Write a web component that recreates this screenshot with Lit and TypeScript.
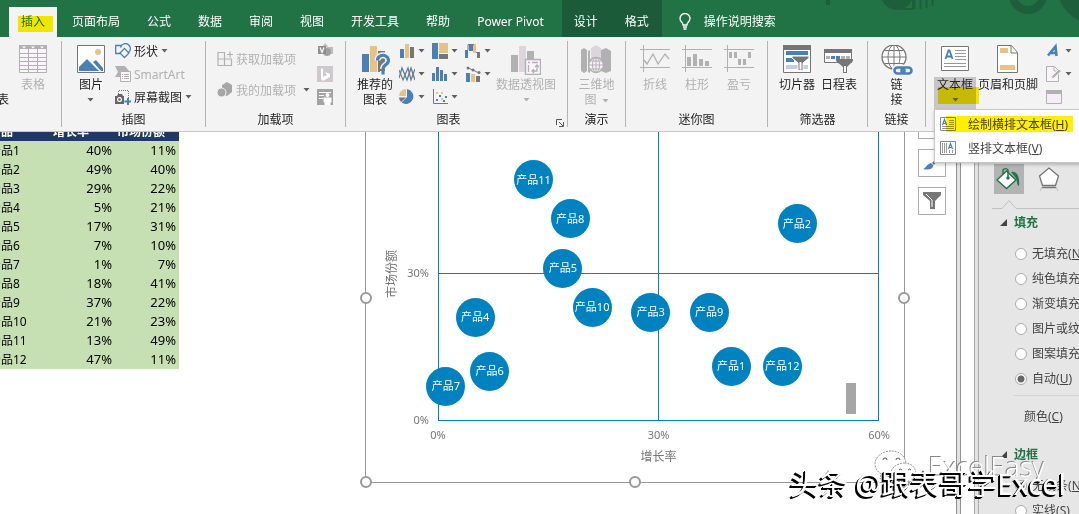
import { LitElement, html, css, svg, nothing, TemplateResult } from "lit";
import { customElement, state } from "lit/decorators.js";
import { classMap } from "lit/directives/class-map.js";

const BLUE = "#4a80b8";
const TAN = "#e8c283";
const GREY = "#767676";
const OFF = "#b1b1b1";

const icon = (w: number, h: number, body: unknown) =>
  html`<svg class="icon" width=${w} height=${h} viewBox="0 0 ${w} ${h}" fill="none" aria-hidden="true">${body}</svg>`;

const chevron = (off = false) =>
  html`<svg class="chevron" width="7" height="4" viewBox="0 0 7 4" aria-hidden="true"><path d="M0.500 0h6L3.500 3.500z" fill=${off ? OFF : "#5f5f5f"} /></svg>`;

const icons: Record<string, () => TemplateResult> = {
  table: () => icon(28, 28, svg`
    <path d="M0.500 0.500h27v27h-27z" fill="#faf5fa" stroke="${OFF}"/>
    <path d="M0 0h28v4H0z" fill="${OFF}"/>
    <path d="M3 1.500h4l-2 2zM12 1.500h4l-2 2zM21 1.500h4l-2 2z" fill="#fff"/>
    <path d="M0 8.500h28M0 12.500h28M0 16.500h28M0 20.500h28M0 24.500h28M9.500 4v24M18.500 4v24" stroke="${OFF}"/>`),
  picture: () => icon(28, 28, svg`
    <path d="M0.500 0.500h27v27h-27z" fill="#fff" stroke="${GREY}"/>
    <circle cx="21" cy="7" r="3" fill="${TAN}"/>
    <path d="M2 26v-4l8-8 12 12zM16 17l3-2 7 8v3h-2z" fill="${BLUE}"/>`),
  shapes: () => icon(16, 16, svg`
    <path d="M7 10.500H0.700v-8H7" stroke="${BLUE}" stroke-width="1.300"/>
    <path d="M5.500 4.500a5 5 0 1 1 8 5" stroke="${BLUE}" stroke-width="1.300"/>
    <path d="M9.500 5.500l4.500 4.500-4.500 4.500L5 10z" fill="#fff" stroke="${BLUE}" stroke-width="1.300"/>`),
  smartart: () => icon(16, 16, svg`
    <path d="M0 0h10l4 5H5v6H0l3-5z" fill="${OFF}"/>
    <path d="M5.500 5.500h10v10h-10z" fill="#faf5fa" stroke="${OFF}"/>
    <path d="M7 8.500h1M9 8.500h5M7 10.500h1M9 10.500h5M7 12.500h1M9 12.500h5" stroke="${OFF}"/>`),
  screenshot: () => icon(16, 16, svg`
    <path d="M3.500 5V1.500h10V9" stroke="${GREY}" stroke-dasharray="1 1"/>
    <path d="M0 7h2l1-2h4l1 2h1v8H0z" fill="#666"/>
    <circle cx="4.500" cy="10.500" r="2.500" fill="#fff"/><circle cx="4.500" cy="10.500" r="1.300" fill="#666"/>
    <path d="M13 9v7M9.500 12.500h7" stroke="${BLUE}" stroke-width="2"/>`),
  getAddins: () => icon(16, 16, svg`
    <path d="M1 1.500h6.500v13H1zM1 8h13.500v6.500H7.500M10 3.500h6M13 0.500v6" stroke="${OFF}" stroke-width="1.200"/>`),
  myAddins: () => icon(16, 16, svg`
    <path d="M5 3l5-3 5 3v7l-5 4-5-2z" fill="#a6a6a6"/><circle cx="4.500" cy="10.500" r="4.500" fill="#a6a6a6" stroke="#f3f3f3"/>`),
  visio: () => icon(16, 16, svg`
    <path d="M8 0l3 3-3 3-2-3zM10 4h6v7h-6z" fill="#bdbdbd"/><circle cx="10" cy="9" r="4" fill="#a0a0a0"/>
    <path d="M1 3h8v8H1z" fill="#8f8f8f"/><path d="M3 4.500l2 5 2-5" stroke="#fff" stroke-width="1.200"/>`),
  bing: () => icon(16, 16, svg`
    <path d="M0 0h16v16H0z" fill="#cdc9cd"/><path d="M4 2l2 1v8l4-2-2-3 5 2v3l-7 4-2-2z" fill="#fff"/>`),
  people: () => icon(16, 16, svg`
    <path d="M0 0h16v16H0z" fill="#a3a3a3"/><path d="M2 3.500h12M2 6.500h5M2 9.500h4" stroke="#fff"/>
    <circle cx="10.500" cy="6" r="2" fill="#fff"/><path d="M6.500 8.500h8v5h-1V16h-6v-3h-1z" fill="#fff"/>`),
  recommended: () => icon(30, 30, svg`
    <path d="M2 9h7v18H2z" fill="${BLUE}"/><path d="M10 1h7v26h-7z" fill="${TAN}"/><path d="M18 6h7v21h-7z" fill="${GREY}"/>
    <path d="M17.500 15.500a5.500 5 0 1 1 8.500 4c-2 1.500-3 2-3 4.500M23 26v3.500" stroke="#f3f3f3" stroke-width="6"/>
    <path d="M17.500 15.500a5.500 5 0 1 1 8.500 4c-2 1.500-3 2-3 4.500M23 26v3.500" stroke="${BLUE}" stroke-width="3.200"/>`),
  column: () => icon(16, 16, svg`
    <path d="M1 6h4v9H1z" fill="${BLUE}"/><path d="M6 1h4v14H6z" fill="${TAN}"/><path d="M11 4h4v11h-4z" fill="${GREY}"/>`),
  treemap: () => icon(16, 16, svg`
    <path d="M0 0h6v16H0z" fill="${BLUE}"/><path d="M7 0h9v10H7z" fill="${TAN}"/><path d="M7 11h9v5H7z" fill="${GREY}"/>`),
  waterfall: () => icon(16, 16, svg`
    <path d="M0 7h3v8H0zM4 2h4v6H4z" fill="${BLUE}"/><path d="M8 1h3v9H8z" fill="${TAN}"/><path d="M12 9h3v6h-3z" fill="${GREY}"/><path d="M3 7V1.500h6M11 9.500h2" stroke="${GREY}"/>`),
  line: () => icon(16, 16, svg`
    <path d="M0 12l3-10 5 12 4-12 4 12" stroke="${BLUE}" stroke-width="1.300"/>
    <path d="M0 4l4 10L9 2l3 12 4-11" stroke="${GREY}" stroke-width="1.200"/>`),
  histogram: () => icon(16, 16, svg`
    <path d="M0 7h3v8H0zM4 1h3v14H4zM8 4h3v11H8zM12 8h3v7h-3z" fill="${BLUE}"/>`),
  combo: () => icon(16, 16, svg`
    <path d="M1 7h4v9H1z" fill="${BLUE}"/><path d="M6 8h4v8H6z" fill="${TAN}"/><path d="M11 10h4v6h-4z" fill="${GREY}"/>
    <path d="M3 2l5 2 6 3" stroke="${GREY}"/><circle cx="3" cy="2" r="1.500" fill="${GREY}"/><circle cx="8" cy="4" r="1.500" fill="${GREY}"/><circle cx="14" cy="6.500" r="1.500" fill="${GREY}"/>`),
  pie: () => icon(16, 16, svg`
    <path d="M8 8V0a7.500 7.500 0 1 1-5.500 13.500z" fill="${BLUE}"/><path d="M7 7H0a7 7 0 0 1 7-7z" fill="${TAN}"/><path d="M7 8.500H0a7 7 0 0 0 2 4.500z" fill="${GREY}"/>`),
  scatter: () => icon(16, 16, svg`
    <path d="M1.500 0v14.500H16" stroke="${GREY}"/>
    <path d="M4 10h2v2H4zM7 6h2v2H7zM13 7h2v2h-2zM11 11h2v2h-2z" fill="${BLUE}"/><path d="M4 3h2v2H4zM9 9h2v2H9zM9 3h2v2H9z" fill="${TAN}"/>`),
  pivotChart: () => icon(30, 30, svg`
    <path d="M0 10h7v17H0zM16 6h7v10h-7z" fill="${OFF}"/><path d="M8 1h7v26H8z" fill="#dcd6dc"/>
    <path d="M14.500 14.500h15v15h-15z" fill="#faf5fa" stroke="${OFF}" stroke-width="1.400"/>
    <path d="M17 17.500h2M21 17.500h6M17.500 20v7M21 26h5v-6M23 24l-2 2 2 2M24 22l2-2 2 2" stroke="${OFF}" stroke-width="1.300"/>`),
  map3d: () => icon(30, 30, svg`
    <path d="M0 5l3-2 3 2v21l-3 2-3-2zM20 5l5-2 5 3v20l-5 2-5-2zM7 6l2-1v23l-2-1z" fill="${OFF}"/>
    <path d="M10 3l5-3 5 3v20H10z" fill="#dcd6dc"/>
    <circle cx="15" cy="20" r="7.500" fill="#f6f2f6" stroke="${OFF}" stroke-width="1.500"/>
    <path d="M7.500 20h15M15 12.500v15M9 16h12M9 24h12" stroke="${OFF}"/><ellipse cx="15" cy="20" rx="3.500" ry="7.500" stroke="${OFF}"/>`),
  sparkLine: () => icon(30, 28, svg`
    <path d="M0 4.500h30M0 22.500h30M3.500 0v27" stroke="${OFF}"/><path d="M4 15l3 4 6-10 5 10 7-10 4 5" stroke="${OFF}" stroke-width="1.300"/>`),
  sparkColumn: () => icon(30, 28, svg`
    <path d="M0 4.500h30M0 22.500h30M3.500 0v27" stroke="${OFF}"/><path d="M5 12h4v9H5zM11 9h4v12h-4zM17 14h4v7h-4zM23 16h4v5h-4z" fill="${OFF}"/>`),
  sparkWin: () => icon(30, 28, svg`
    <path d="M0 4.500h30M0 22.500h30M3.500 0v27" stroke="${OFF}"/><path d="M5 7h3v6H5zM10 7h3v6h-3zM14 14h3v6h-3zM19 14h3v6h-3zM24 7h3v6h-3z" fill="${OFF}"/>`),
  slicer: () => icon(28, 28, svg`
    <path d="M0.500 0.500h27v27h-27z" fill="#fff" stroke="${GREY}"/><path d="M0 0h28v5H0z" fill="${GREY}"/>
    <path d="M3 6h22v4H3zM3 13h8v4H3z" fill="${BLUE}"/><path d="M3 20h22v4H3z" fill="#bdd0e6"/>
    <path d="M9 11h17v2l-6 5v8l-5-1v-7l-6-5z" fill="${GREY}" stroke="#fff"/><path d="M16.500 17h2v8l-2-1z" fill="#fff"/>`),
  timeline: () => icon(30, 28, svg`
    <path d="M0.500 4.500h27v13h-27z" fill="#fff" stroke="${GREY}"/><path d="M0 4h28v4H0z" fill="${GREY}"/>
    <path d="M2 11h4v3H2z" fill="${OFF}"/><path d="M7 11h4v3H7zM12 11h4v3h-4z" fill="${BLUE}"/><path d="M17 11h4v3h-4zM22 11h4v3h-4z" fill="${OFF}"/>
    <path d="M12 14h17v2l-6 6v8h-4v-8l-7-6z" fill="${GREY}"/><path d="M20 21h2v6h-2z" fill="#fff"/>`),
  link: () => icon(32, 30, svg`
    <circle cx="13" cy="12" r="12" fill="#fff" stroke="${GREY}" stroke-width="1.300"/>
    <path d="M13 0v24M1 12h24M3.500 5.500h19M3.500 18.500h19" stroke="${GREY}"/><ellipse cx="13" cy="12" rx="6" ry="12" stroke="${GREY}"/>
    <rect x="13.500" y="21.500" width="10" height="7" rx="3.500" stroke="#f3f3f3" stroke-width="5"/>
    <rect x="13.500" y="22.500" width="10" height="6" rx="3" stroke="${BLUE}" stroke-width="2.600"/>
    <rect x="20.500" y="22.500" width="10" height="6" rx="3" stroke="${BLUE}" stroke-width="2.600"/>`),
  textBox: () => icon(28, 28, svg`
    <path d="M0.500 1.500h27v24h-27z" fill="#fff" stroke="${GREY}"/>
    <path d="M4.500 14L7.500 5.500h1l3 8.500M5.500 11.500h5" stroke="${BLUE}" stroke-width="1.800"/>
    <path d="M14 5.500h11M14 8.500h11M14 11.500h11M14 14.500h11M3 18.500h22M3 21.500h22" stroke="#999"/>`),
  headerFooter: () => icon(22, 28, svg`
    <path d="M0.500 0.500h14l6 7v20H0.500z" fill="#fff" stroke="${GREY}"/><path d="M14 1v7h7" stroke="${GREY}"/>
    <path d="M3 3h8v5H3zM3 20h15v5H3z" fill="${TAN}"/>`),
  wordArt: () => icon(16, 16, svg`<path d="M2 12.500L9.500 3.500l1 9.500M5 10h6" stroke="${BLUE}" stroke-width="2.600"/>`),
  signature: () => icon(16, 16, svg`
    <path d="M0.500 0.500h8l4 4v11h-12z" fill="#f8f4f8" stroke="${OFF}"/><path d="M8 1v4h4" stroke="${OFF}"/>
    <path d="M5 13l1-3 7-7 2.500 2L8 12z" fill="${OFF}" stroke="#f3f3f3"/>`),
  object: () => icon(16, 14, svg`<path d="M0.500 0.500h15v13h-15z" fill="#f6eef6" stroke="${OFF}"/><path d="M0 0h16v4H0z" fill="${OFF}"/>`),
  menuHorizontal: () => icon(16, 14, svg`
    <path d="M0.500 0.500h15v13h-15z" fill="#fff" stroke="#8a8a8a"/><path d="M2.500 8L4.500 2.500 6.500 8M3 6.500h3" stroke="${BLUE}" stroke-width="1.200"/>
    <path d="M9 3.500h5M9 5.500h5M9 7.500h5M2 9.500h12M2 11.500h12" stroke="#999"/>`),
  menuVertical: () => icon(16, 14, svg`
    <path d="M0.500 0.500h15v13h-15z" fill="#fff" stroke="#8a8a8a"/><path d="M8.500 8L10.500 2.500 12.500 8M9 6.500h3" stroke="${BLUE}" stroke-width="1.200"/>
    <path d="M2.500 2v10M4.500 2v10M6.500 2v10M9.500 9v3M12.500 9v3" stroke="#999"/>`),
  brush: () => icon(18, 18, svg`
    <path d="M17 1L9 9l2 2 6-8z" fill="${GREY}"/><path d="M8 9l2.500 2.500C9 16 5 16 0 15c3-1 4-5 8-6z" fill="${BLUE}"/>`),
  funnel: () => icon(18, 18, svg`<path d="M0 0h18v3l-6 6v8H7V9L0 3z" fill="${GREY}"/><path d="M3 2l6 6v7" stroke="#fff"/>`),
  bucket: () => icon(26, 24, svg`
    <path d="M15 5c5-1 9 3 8 14-3-1-1-6-4-9z" fill="#217346"/>
    <path d="M10.500 4L20 13l-9.500 8.500L1 13z" fill="#fff" stroke="#217346" stroke-width="1.400"/>
    <path d="M7 7V3a3 3 0 0 1 5 0v7" stroke="#217346" stroke-width="1.400"/><circle cx="12" cy="11" r="1.700" fill="#217346"/>`),
  pentagon: () => icon(22, 24, svg`
    <path d="M11 1l9.500 8-3 9.500h-13L1.500 9z" fill="#fff" stroke="${GREY}" stroke-width="1.300"/>
    <path d="M4 20.500h14" stroke="${GREY}" stroke-width="1.500"/><path d="M4 20l-2 4M18 20l2 4" stroke="#bbb"/>`),
  size: () => icon(18, 20, svg`<path d="M0 2.500h16M0 17.500h16M8 4v12" stroke="${GREY}"/>`),
};

const GROWTH_SHARE: [string, number, number][] = [
  ["产品1", 40, 11], ["产品2", 49, 40], ["产品3", 29, 22], ["产品4", 5, 21],
  ["产品5", 17, 31], ["产品6", 7, 10], ["产品7", 1, 7], ["产品8", 18, 41],
  ["产品9", 37, 22], ["产品10", 21, 23], ["产品11", 13, 49], ["产品12", 47, 11],
];
const AXIS_MAX = 60;

@customElement("app-root")
export class AppRoot extends LitElement {
  @state() private fill = "auto";

  static styles = css`
    :host {
      display: flex;
      flex-direction: column;
      height: 100vh;
      position: relative;
      overflow: hidden;
      background: #fff;
      color: #262626;
      font: 12px/15px "Noto Sans", "Noto Sans CJK SC", sans-serif;
    }
    * { box-sizing: border-box; }
    button {
      font: inherit;
      color: inherit;
      background: none;
      border: 0;
      padding: 0;
      margin: 0;
      white-space: nowrap;
    }
    button:disabled { color: #b1b1b1; }
    svg { display: block; flex: none; }
    .highlight {
      position: absolute;
      background: #fff000;
      mix-blend-mode: multiply;
      pointer-events: none;
    }

    .tabs {
      flex: none;
      display: flex;
      gap: 3px;
      height: 37px;
      padding: 7px 0 0 9px;
      background: #217346;
      color: #fff;
      position: relative;
    }
    .art { position: absolute; right: 0; top: 0; }
    .tab { padding: 0 12px 2px; position: relative; }
    .tab.active { background: #f3f3f3; color: #217346; }
    .tab .highlight { left: 9px; top: 9px; width: 35px; height: 16px; }
    .context {
      display: flex;
      gap: 3px;
      margin: -7px 0 0 3px;
      padding: 7px 1px 0 0;
      background: #1c5b39;
    }
    .tell { display: flex; align-items: center; gap: 12px; padding: 0 13px 2px; }

    .ribbon {
      flex: none;
      display: flex;
      padding: 4px 0;
      background: #f3f3f3;
      border-bottom: 1px solid #c8c8c8;
    }
    .group {
      flex: none;
      display: flex;
      flex-direction: column;
      justify-content: space-between;
      border-right: 1px solid #b4b4b4;
      position: relative;
      height: 86px;
    }
    .group:last-child { border-right: 0; }
    .body { display: flex; align-items: flex-start; height: 72px; }
    .caption { text-align: center; line-height: 14px; height: 14px; }
    .launcher { position: absolute; right: 3px; bottom: 0; }
    .g-tables { width: 62px; }
    .g-tables .body { gap: 10px; }
    .g-illus { width: 144px; }
    .g-illus .body { padding-left: 15px; gap: 10px; }
    .g-addins { width: 140px; }
    .g-addins .body { padding-left: 11px; gap: 7px; }
    .g-charts { width: 222px; }
    .g-charts .body { padding-left: 11px; gap: 6px; }
    .g-charts .caption { padding-right: 16px; }
    .g-tour, .g-link { width: 58px; }
    .g-tour .body, .g-link .body { justify-content: center; }
    .g-spark { width: 142px; }
    .g-spark .body { padding-left: 14px; gap: 12px; }
    .g-filter { width: 100px; }
    .g-filter .body { padding-left: 11px; gap: 6px; }
    .g-text .body { padding-left: 8px; gap: 2px; }

    .large {
      display: flex;
      flex-direction: column;
      align-items: center;
      padding-top: 4px;
      line-height: 15px;
    }
    .large .glyph { height: 32px; display: flex; }
    .large .label { display: block; text-align: center; }
    .large .drop { height: 15px; display: flex; align-items: center; justify-content: center; }
    .large .inline { display: inline-block; margin-left: 5px; vertical-align: middle; }
    .clipped { width: 9px; overflow: hidden; align-items: flex-end; padding-top: 51px; }
    .stack { display: flex; flex-direction: column; gap: 3px; }
    .wide { padding-top: 8px; gap: 11px; }
    .small { display: flex; align-items: center; gap: 3px; height: 20px; }
    .wide .chevron { margin-left: 4px; }
    .gallery {
      display: grid;
      grid-template-columns: repeat(3, 25px);
      grid-auto-rows: 20px;
      gap: 3px 8px;
    }

    .split { position: relative; }
    .split .large { width: 42px; }
    .split .label { width: 42px; height: 33px; background: #c6c6c6; }
    .split .highlight { left: 4px; top: 46px; width: 41px; height: 17px; }
    .tail { padding-left: 6px; }
    .menu {
      position: absolute;
      z-index: 3;
      left: 0;
      top: 68px;
      width: 150px;
      padding: 2px 0;
      background: #fff;
      border: 1px solid #c6c6c6;
      box-shadow: 0 2px 3px #0003;
    }
    .item {
      display: flex;
      align-items: center;
      gap: 12px;
      width: 100%;
      height: 24px;
      padding-left: 5px;
      color: #444;
    }
    .menu .highlight { left: 11px; top: 6px; width: 127px; height: 16px; }

    .workspace { flex: 1; min-height: 0; display: flex; }
    .sheet {
      flex: 1;
      min-width: 0;
      display: flex;
      align-items: flex-start;
      overflow: hidden;
    }
    table {
      flex: none;
      table-layout: fixed;
      width: 192px;
      margin: -10px 0 0 -13px;
      border-collapse: collapse;
      background: #c6e0b4;
      color: #000;
    }
    th, td { height: 19px; padding: 0 3px 0 2px; line-height: 19px; text-align: left; white-space: nowrap; }
    th { background: #203864; color: #fff; font-weight: 700; }
    td.number { text-align: right; font-size: 13px; }

    .chart {
      flex: 1;
      position: relative;
      display: flex;
      flex-direction: column;
      height: 371px;
      margin: -20px 0 0 186px;
      padding: 11px 25px 0 72px;
      border: 1px solid #999;
      color: #767676;
      font-size: 11px;
    }
    .plot { position: relative; flex: none; height: 297px; border: 1px solid #0082c0; }
    .mid-x, .mid-y { position: absolute; background: #0082c0; }
    .mid-x { left: calc(50% - 1px); top: 0; bottom: 0; width: 1px; }
    .mid-y { top: 50%; left: 0; right: 0; height: 1px; }
    .bubble {
      position: absolute;
      width: 39px;
      height: 39px;
      margin: -19px -20px;
      border-radius: 50%;
      background: #0082c0;
      color: #fff;
      display: flex;
      align-items: center;
      justify-content: center;
      padding-bottom: 1px;
    }
    .marker { position: absolute; right: 22px; bottom: 6px; width: 10px; height: 31px; background: #a6a6a6; }
    .tick { position: absolute; right: 100%; margin: -8px 10px 0 0; }
    .ticks { display: flex; justify-content: space-between; margin: 6px -13px 0; }
    .ticks span { width: 26px; text-align: center; }
    .title { text-align: center; font-size: 12px; margin-top: 7px; }
    .title.side {
      position: absolute;
      left: 18px;
      top: 50%;
      margin-top: -48px;
      writing-mode: vertical-rl;
      text-orientation: sideways;
      transform: rotate(180deg);
    }
    .handle {
      position: absolute;
      width: 12px;
      height: 12px;
      margin: -6px;
      border: 2px solid #999;
      border-radius: 50%;
      background: #fff;
    }
    .tools { flex: none; display: flex; flex-direction: column; gap: 10px; margin: -21px 10px 0 13px; }
    .tool {
      width: 28px;
      height: 28px;
      display: flex;
      align-items: center;
      justify-content: center;
      border: 1px solid #ababab;
      background: #fff;
    }
    .bar { flex: none; width: 5px; background: #e2e2e2; border: solid #919191; border-width: 0 1px; }
    .bar.second { margin-left: 13px; border-color: #ababab; }

    .pane { flex: none; width: 100px; padding: 32px 0 0 15px; background: #e6e6e6; color: #444; overflow: hidden; white-space: nowrap; }
    .modes { display: flex; gap: 10px; width: 130px; }
    .mode { width: 30px; height: 30px; flex: none; display: flex; align-items: center; justify-content: center; }
    .mode.on { background: #b3b3b3; }
    .notch { margin: 5px 0 0 -2px; }
    .section { display: flex; align-items: center; gap: 7px; height: 25px; padding-left: 6px; color: #217346; font-weight: 700; }
    .first { margin-top: 1px; }
    .choice { display: flex; align-items: center; gap: 5px; height: 25px; padding-left: 21px; }
    .options { margin-top: 6px; }
    input {
      appearance: none;
      flex: none;
      width: 12px;
      height: 12px;
      margin: 0;
      border: 1px solid #ababab;
      border-radius: 50%;
      background: #fff;
    }
    input:checked { background: radial-gradient(circle, #666 3px, #fff 4px); }
    .color { margin: 4px 0 0 20px; padding: 12px 0 0 10px; border-top: 1px solid #d4d4d4; height: 47px; line-height: 17px; }

    .mark { position: absolute; z-index: 4; right: 13px; bottom: 14px; pointer-events: none; color: #fff; white-space: nowrap; }
    .mark .credit {
      display: flex;
      justify-content: flex-end;
      align-items: center;
      gap: 12px;
      padding-right: 21px;
      height: 34px;
      font-size: 27px;
      font-weight: 300;
      text-shadow: -1px -1px 0 #888;
    }
    .mark .source {
      font-size: 29px;
      line-height: 32px;
      margin-top: -15px;
      text-shadow: -1px 1px 0 #000, -2px 2px 0 #000;
    }
  `;

  private large(name: string, label: unknown, opts: { off?: boolean; drop?: boolean } = {}) {
    return html`<button class="large" ?disabled=${opts.off ?? false}>
      <span class="glyph">${icons[name]()}</span>
      <span class="label">${label}${opts.drop ? html`<span class="drop">${chevron(opts.off)}</span>` : nothing}</span>
    </button>`;
  }

  private small(name: string, label = "", drop = false, off = false) {
    return html`<button class="small" aria-label=${label || name} ?disabled=${off}>
      ${icons[name]()}${label ? html`<span>${label}</span>` : nothing}${drop ? chevron() : nothing}
    </button>`;
  }

  private group(cls: string, caption: string, body: unknown, extra: unknown = nothing) {
    return html`<section class="group ${cls}"><div class="body">${body}</div><div class="caption">${caption}</div>${extra}</section>`;
  }

  private tabs() {
    const names = ["页面布局", "公式", "数据", "审阅", "视图", "开发工具", "帮助", "Power Pivot"];
    return html`<nav class="tabs">
      <svg class="art" width="260" height="37" viewBox="0 0 260 37" fill="none" aria-hidden="true">
        <path d="M7 0h4v5H7z" fill="#1d5f3b" />
        <circle cx="78" cy="-6" r="16" fill="#1d5f3b" />
        <path d="M84 0h10v9H84zM95.500 0v9M101.500 0v9M107.500 0v8M113.500 0v6" stroke="#1d5f3b" stroke-width="2" />
        <circle cx="209" cy="-5" r="15" stroke="#1d5f3b" stroke-width="8" />
        <circle cx="276" cy="-14" r="38" fill="#1d5f3b" />
      </svg>
      <button class="tab active">插入<span class="highlight"></span></button>
      ${names.map((n) => html`<button class="tab">${n}</button>`)}
      <div class="context"><button class="tab">设计</button><button class="tab">格式</button></div>
      <button class="tell">
        <svg width="14" height="17" viewBox="0 0 14 17" fill="none" stroke="#fff" stroke-width="1.300" aria-hidden="true">
          <path d="M5 12c0-3-3-3-3-6.500a5 5 0 0 1 10 0C12 9 9 9 9 12zM5 14h4M5.500 16h3" />
        </svg>
        <span>操作说明搜索</span>
      </button>
    </nav>`;
  }

  private ribbon() {
    const gallery = ["column", "treemap", "waterfall", "line", "histogram", "combo", "pie", "scatter"];
    return html`<div class="ribbon">
      ${this.group("g-tables", "", html`
        <button class="large clipped">表</button>${this.large("table", "表格", { off: true })}`)}
      ${this.group("g-illus", "插图", html`
        ${this.large("picture", "图片", { drop: true })}
        <div class="stack">
          ${this.small("shapes", "形状", true)}${this.small("smartart", "SmartArt", false, true)}${this.small("screenshot", "屏幕截图", true)}
        </div>`)}
      ${this.group("g-addins", "加载项", html`
        <div class="stack wide">${this.small("getAddins", "获取加载项", false, true)}${this.small("myAddins", "我的加载项", true, true)}</div>
        <div class="stack">${this.small("visio")}${this.small("bing")}${this.small("people")}</div>`)}
      ${this.group("g-charts", "图表", html`
        ${this.large("recommended", html`推荐的<br />图表`)}
        <div class="gallery">${gallery.map((n) => this.small(n, "", true))}</div>
        ${this.large("pivotChart", "数据透视图", { off: true, drop: true })}`,
        html`<button class="launcher" aria-label="图表选项">
          <svg width="8" height="8" viewBox="0 0 8 8" fill="none" stroke="#555" aria-hidden="true"><path d="M0.500 6V0.500H6M3 3l4 4M7.500 3v4.500H3" /></svg>
        </button>`)}
      ${this.group("g-tour", "演示", this.large("map3d", html`三维地<br />图<span class="inline">${chevron(true)}</span>`, { off: true }))}
      ${this.group("g-spark", "迷你图", html`
        ${this.large("sparkLine", "折线", { off: true })}${this.large("sparkColumn", "柱形", { off: true })}${this.large("sparkWin", "盈亏", { off: true })}`)}
      ${this.group("g-filter", "筛选器", html`${this.large("slicer", "切片器")}${this.large("timeline", "日程表")}`)}
      ${this.group("g-link", "链接", this.large("link", html`链<br />接`))}
      ${this.group("g-text", "", html`
        <div class="split">
          ${this.large("textBox", "文本框", { drop: true })}
          <span class="highlight"></span>
          <div class="menu" role="menu">
            <button class="item" role="menuitem">${icons.menuHorizontal()}<span>绘制横排文本框(<u>H</u>)</span></button>
            <button class="item" role="menuitem">${icons.menuVertical()}<span>竖排文本框(<u>V</u>)</span></button>
            <span class="highlight"></span>
          </div>
        </div>
        ${this.large("headerFooter", "页眉和页脚")}
        <div class="stack tail">${this.small("wordArt", "", true)}${this.small("signature", "", true)}${this.small("object")}</div>`)}
    </div>`;
  }

  private chart() {
    const handles = [[0, 0], [50, 0], [100, 0], [0, 50], [100, 50], [0, 100], [50, 100], [100, 100]];
    return html`<div class="chart">
      <div class="plot">
        <span class="mid-x"></span><span class="mid-y"></span>
        <span class="tick" style="top:50%">30%</span><span class="tick" style="top:100%">0%</span>
        ${GROWTH_SHARE.map(([name, x, y]) => html`<span class="bubble"
          style="left:${(x / AXIS_MAX) * 100}%;top:${100 - (y / AXIS_MAX) * 100}%">${name}</span>`)}
        <span class="marker"></span>
      </div>
      <div class="ticks"><span>0%</span><span>30%</span><span>60%</span></div>
      <div class="title">增长率</div>
      <div class="title side">市场份额</div>
      ${handles.map(([x, y]) => html`<span class="handle" style="left:${x}%;top:${y}%"></span>`)}
    </div>`;
  }

  private section(label: string, first = false) {
    return html`<div class=${classMap({ section: true, first })}>
      <svg width="7" height="7" viewBox="0 0 7 7" aria-hidden="true"><path d="M7 0v7H0z" fill="#444" /></svg>${label}
    </div>`;
  }

  private choice(group: string, id: string, text: string, key: string) {
    return html`<label class="choice"><input type="radio" name=${group} .checked=${group === "fill" ? this.fill === id : id === "none"}
      @change=${() => { if (group === "fill") this.fill = id; }} /><span>${text}(<u>${key}</u>)</span></label>`;
  }

  private pane() {
    return html`<aside class="pane">
      <div class="modes">
        <button class="mode on" aria-label="填充与线条">${icons.bucket()}</button>
        <button class="mode" aria-label="效果">${icons.pentagon()}</button>
        <button class="mode" aria-label="大小与属性">${icons.size()}</button>
      </div>
      <svg class="notch" width="120" height="10" viewBox="0 0 120 10" fill="none" stroke="#c0c0c0" aria-hidden="true"><path d="M0 9.500h10l7-8 7 8h96" /></svg>
      ${this.section("填充", true)}
      <div class="options">
        ${this.choice("fill", "none", "无填充", "N")}
        ${this.choice("fill", "solid", "纯色填充", "S")}
        ${this.choice("fill", "gradient", "渐变填充", "G")}
        ${this.choice("fill", "picture", "图片或纹理填充", "P")}
        ${this.choice("fill", "pattern", "图案填充", "A")}
        ${this.choice("fill", "auto", "自动", "U")}
      </div>
      <div class="color">颜色(<u>C</u>)</div>
      ${this.section("边框")}
      <div class="options">${this.choice("line", "none", "无线条", "N")}${this.choice("line", "solid", "实线", "S")}</div>
    </aside>`;
  }

  render() {
    return html`
      ${this.tabs()} ${this.ribbon()}
      <main class="workspace">
        <div class="sheet">
          <table>
            <thead><tr><th>产品</th><th>增长率</th><th>市场份额</th></tr></thead>
            <tbody>${GROWTH_SHARE.map(([name, g, s]) => html`<tr><td>${name}</td><td class="number">${g}%</td><td class="number">${s}%</td></tr>`)}</tbody>
          </table>
          ${this.chart()}
          <div class="tools">
            <button class="tool" aria-label="图表元素"></button>
            <button class="tool" aria-label="图表样式">${icons.brush()}</button>
            <button class="tool" aria-label="图表筛选器">${icons.funnel()}</button>
          </div>
        </div>
        <div class="bar"></div>
        <div class="bar second"></div>
        ${this.pane()}
      </main>
      <div class="mark">
        <div class="credit">
          <svg width="42" height="32" viewBox="0 0 42 32" fill="#fff" stroke="#999" stroke-dasharray="2 1" aria-hidden="true">
            <path d="M17 1C8 1 1 7 1 14c0 4 2 7 6 10l-1 5 6-3 5 1c9 0 15-6 15-13S26 1 17 1z" />
            <path d="M31 13c-8 0-14 5-14 10s6 9 14 9l4-1 4 2-1-4c3-2 4-4 4-6 0-5-5-10-11-10z" />
            <path d="M9 10a2 2 0 0 1 4 0M22 10a2 2 0 0 1 4 0M25 20a2 2 0 0 1 3 0M34 20a2 2 0 0 1 3 0" stroke="#555" stroke-dasharray="none" />
          </svg>
          <span>ExcelEasy</span>
        </div>
        <div class="source">头条 @跟表哥学Excel</div>
      </div>
    `;
  }
}
